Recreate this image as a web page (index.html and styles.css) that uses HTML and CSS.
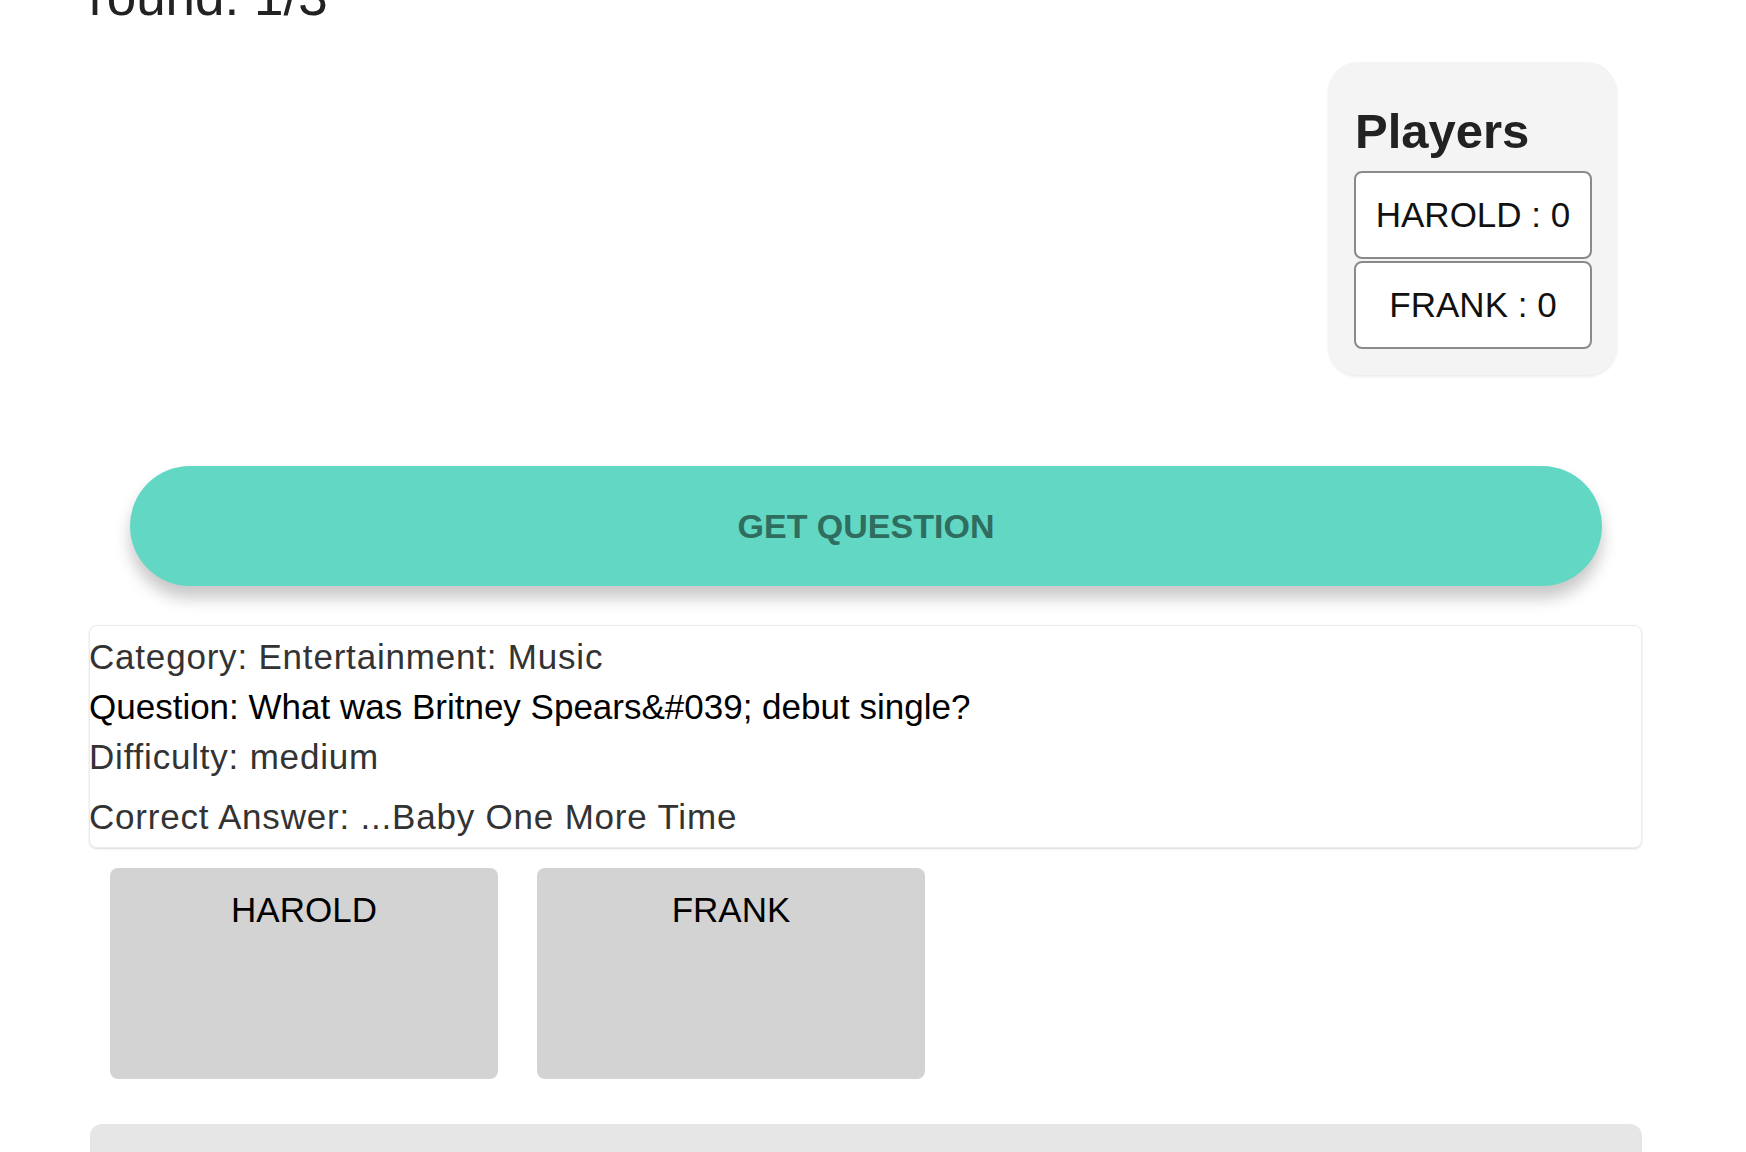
FILE: index.html
```html
<!DOCTYPE html>
<html>
<head>
<meta charset="utf-8">
<link rel="stylesheet" href="styles.css">
</head>
<body>
<div class="page">
  <h1 class="round">round: 1/3</h1>
  <div class="top-row">
    <div class="players">
      <h2 class="players-title">Players</h2>
      <div class="player-item">HAROLD : 0</div>
      <div class="player-item">FRANK : 0</div>
    </div>
  </div>
  <div class="btn-wrap">
    <button class="get-btn">GET QUESTION</button>
  </div>
  <div class="q-card">
    <div class="q-line muted">Category: Entertainment: Music</div>
    <div class="q-line">Question: What was Britney Spears&amp;#039; debut single?</div>
    <div class="q-line muted">Difficulty: medium</div>
    <div class="q-line muted answer">Correct Answer: ...Baby One More Time</div>
  </div>
  <div class="answer-row">
    <div class="answer-card">HAROLD</div>
    <div class="answer-card">FRANK</div>
  </div>
  <div class="bottom-bar"></div>
</div>
</body>
</html>
```
FILE: styles.css
```css
html, body {
  margin: 0;
  padding: 0;
  background: #ffffff;
  overflow: hidden;
}
body {
  font-family: "Liberation Sans", Arial, sans-serif;
  color: #222;
}
.page {
  margin-left: 89px;
  width: 1553px;
  margin-top: -33px;
}
.round {
  margin: 0;
  font-size: 53px;
  line-height: 60px;
  font-weight: normal;
  color: #222;
}
.top-row {
  display: flex;
  justify-content: flex-end;
  margin-top: 35px;
  padding-right: 25px;
}
.players {
  width: 289px;
  box-sizing: border-box;
  background: #f4f4f4;
  border-radius: 30px;
  padding: 41px 25px 26px 26px;
  box-shadow: 0 2px 3px rgba(0,0,0,0.08);
}
.players-title {
  margin: 0 0 12px 1px;
  font-size: 49px;
  line-height: 56px;
  font-weight: bold;
  color: #222;
}
.player-item {
  box-sizing: border-box;
  height: 88px;
  border: 2px solid #8a8a8a;
  border-radius: 8px;
  background: #fff;
  text-align: center;
  font-size: 35px;
  line-height: 84px;
  color: #111;
}
.player-item + .player-item {
  margin-top: 2px;
}
.btn-wrap {
  padding: 0 40px 0 41px;
  margin-top: 91px;
}
.get-btn {
  display: block;
  width: 100%;
  height: 120px;
  border: none;
  border-radius: 60px;
  background: #62d7c4;
  color: #2f6d5f;
  font-family: "Liberation Sans", Arial, sans-serif;
  font-size: 34px;
  font-weight: bold;
  box-shadow: 0 12px 16px rgba(0,0,0,0.22);
}
.q-card {
  margin-top: 39px;
  border: 1px solid #ececec;
  border-radius: 8px;
  padding: 6px 0 5px 0;
  box-shadow: 0 1px 2px rgba(0,0,0,0.15);
}
.q-line {
  font-size: 35px;
  line-height: 50px;
  color: #000;
  margin-left: -1px;
}
.q-line.muted {
  color: #333;
  letter-spacing: 0.8px;
}
.q-line.answer {
  margin-top: 10px;
}
.answer-row {
  display: flex;
  gap: 39px;
  margin-top: 20px;
  padding-left: 21px;
}
.answer-card {
  width: 388px;
  height: 211px;
  box-sizing: border-box;
  background: #d3d3d3;
  border-radius: 8px;
  text-align: center;
  font-size: 35px;
  line-height: 40px;
  padding-top: 22px;
  color: #000;
}
.bottom-bar {
  margin-top: 45px;
  margin-left: 1px;
  height: 200px;
  background: #e6e6e6;
  border-radius: 12px;
}
```
